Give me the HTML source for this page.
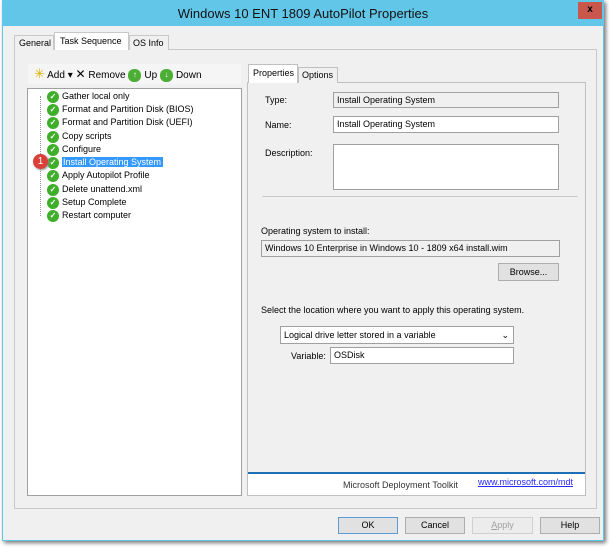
<!DOCTYPE html>
<html><head><style>
*{box-sizing:border-box;margin:0;padding:0}
body{width:616px;height:553px;background:#fff;font-family:"Liberation Sans",sans-serif;font-size:9px;color:#000;position:relative;overflow:hidden}
.a{position:absolute;white-space:nowrap}
.win{left:2px;top:0;width:602px;height:541px;background:#f0f0f0;border:1px solid #5fc4e6;box-shadow:2px 2px 4px #777}
.title{left:2px;top:0;width:602px;height:26px;background:#62c6e8;font-size:13px;text-align:center;line-height:28px;color:#111}
.close{left:578px;top:2px;width:24px;height:17px;background:#c9574c;color:#000;text-align:center;font-size:10px;font-weight:bold;line-height:16px}
.box{border:1px solid #a0a0a0;background:#fff;padding-left:3px;line-height:14px}
.gray{background:#f0f0f0}
.btn{border:1px solid #adadad;background:#e1e1e1;text-align:center;line-height:15px}
.tree div{position:absolute;left:0;height:13px;line-height:13px;white-space:nowrap}
.ck{display:inline-block;width:12px;height:12px;border-radius:6px;background:#3fae2a;color:#fff;font-size:8px;line-height:12px;text-align:center;vertical-align:middle;margin-right:3px;font-weight:bold}
</style></head><body>
<div class="a win"></div>
<div class="a title">Windows 10 ENT 1809 AutoPilot Properties</div>
<div class="a close">x</div>
<div class="a" style="left:14px;top:49px;width:583px;height:460px;border:1px solid #c8c8c8;background:#f0f0f0"></div>
<div class="a" style="left:14px;top:35px;width:40px;height:15px;border:1px solid #c8c8c8;border-bottom:none;background:#f0f0f0;line-height:14px;padding-left:4px">General</div>
<div class="a" style="left:54px;top:32px;width:75px;height:18px;border:1px solid #c8c8c8;border-bottom:none;background:#fff;line-height:16px;padding-left:5px">Task Sequence</div>
<div class="a" style="left:129px;top:35px;width:40px;height:15px;border:1px solid #c8c8c8;border-bottom:none;background:#f0f0f0;line-height:14px;padding-left:3px">OS Info</div>
<div class="a" style="left:28px;top:64px;width:213px;height:20px;background:#f5f5f5;font-size:10px;line-height:20px">
<span style="color:#e0b000;font-size:13px;margin-left:6px">✳</span> Add ▾ <span style="font-size:12px">✕</span> Remove <span class="ck" style="width:13px;height:13px;background:#4cae34">↑</span>Up <span class="ck" style="width:13px;height:13px;background:#4cae34">↓</span>Down</div>
<div class="a" style="left:27px;top:88px;width:215px;height:408px;border:1px solid #a0a0a0;background:#fff"></div>
<div class="a" style="left:40px;top:96px;width:0;height:120px;border-left:1px dotted #999"></div>
<div class="a tree" style="left:47px;top:90px;width:190px;height:140px">
<div style="top:0"><span class="ck">✓</span>Gather local only</div>
<div style="top:13px"><span class="ck">✓</span>Format and Partition Disk (BIOS)</div>
<div style="top:26px"><span class="ck">✓</span>Format and Partition Disk (UEFI)</div>
<div style="top:40px"><span class="ck">✓</span>Copy scripts</div>
<div style="top:53px"><span class="ck">✓</span>Configure</div>
<div style="top:66px"><span class="ck">✓</span><span style="background:#3399ff;color:#fff;padding:0 2px 0 1px">Install Operating System</span></div>
<div style="top:79px"><span class="ck">✓</span>Apply Autopilot Profile</div>
<div style="top:93px"><span class="ck">✓</span>Delete unattend.xml</div>
<div style="top:106px"><span class="ck">✓</span>Setup Complete</div>
<div style="top:119px"><span class="ck">✓</span>Restart computer</div>
</div>
<div class="a" style="left:33px;top:154px;width:15px;height:15px;border-radius:8px;background:#d9403a;color:#fff;font-size:10px;text-align:center;line-height:15px;box-shadow:1px 1px 2px #888">1</div>
<div class="a" style="left:247px;top:82px;width:339px;height:414px;border:1px solid #c0c0c0;background:#f0f0f0"></div>
<div class="a" style="left:248px;top:472px;width:337px;height:23px;background:#fff;border-top:2px solid #1f6fb8"></div>
<div class="a" style="left:248px;top:64px;width:50px;height:19px;border:1px solid #c0c0c0;border-bottom:none;background:#fff;line-height:17px;padding-left:4px">Properties</div>
<div class="a" style="left:298px;top:67px;width:40px;height:16px;border:1px solid #c0c0c0;border-bottom:none;background:#f0f0f0;line-height:15px;padding-left:3px">Options</div>
<div class="a" style="left:265px;top:95px">Type:</div>
<div class="a box gray" style="left:333px;top:92px;width:226px;height:16px">Install Operating System</div>
<div class="a" style="left:265px;top:120px">Name:</div>
<div class="a box" style="left:333px;top:116px;width:226px;height:17px">Install Operating System</div>
<div class="a" style="left:265px;top:148px">Description:</div>
<div class="a box" style="left:333px;top:144px;width:226px;height:46px"></div>
<div class="a" style="left:262px;top:196px;width:316px;height:1px;background:#c8c8c8"></div>
<div class="a" style="left:261px;top:226px">Operating system to install:</div>
<div class="a box gray" style="left:261px;top:240px;width:299px;height:17px">Windows 10 Enterprise in Windows 10 - 1809 x64 install.wim</div>
<div class="a btn" style="left:498px;top:263px;width:61px;height:18px;line-height:16px">Browse...</div>
<div class="a" style="left:261px;top:305px">Select the location where you want to apply this operating system.</div>
<div class="a box" style="left:280px;top:326px;width:234px;height:18px;line-height:16px">Logical drive letter stored in a variable<span style="position:absolute;right:4px;font-size:9px">⌄</span></div>
<div class="a" style="left:291px;top:351px">Variable:</div>
<div class="a box" style="left:330px;top:347px;width:184px;height:17px">OSDisk</div>
<div class="a" style="left:343px;top:480px;color:#333">Microsoft Deployment Toolkit</div>
<div class="a" style="left:478px;top:477px;color:#2a2aff;text-decoration:underline;font-size:9px">www.microsoft.com/mdt</div>
<div class="a btn" style="left:338px;top:517px;width:60px;height:17px;border-color:#5a9bd5">OK</div>
<div class="a btn" style="left:405px;top:517px;width:60px;height:17px">Cancel</div>
<div class="a btn" style="left:472px;top:517px;width:61px;height:17px;color:#a0a0a0;background:#ececec;border-color:#d0d0d0"><u>A</u>pply</div>
<div class="a btn" style="left:540px;top:517px;width:60px;height:17px">Help</div>
</body></html>
